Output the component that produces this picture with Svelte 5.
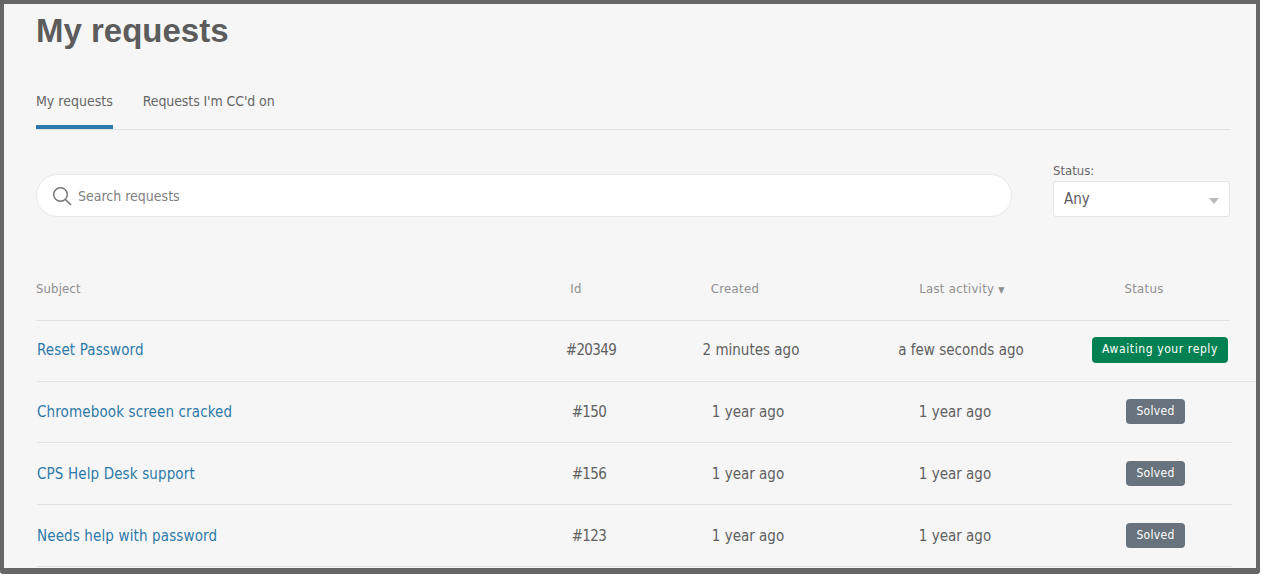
<script lang="ts">
	const rows = [
		{ subject: 'Reset Password', id: '#20349', created: '2 minutes ago', activity: 'a few seconds ago', status: 'Awaiting your reply', open: true },
		{ subject: 'Chromebook screen cracked', id: '#150', created: '1 year ago', activity: '1 year ago', status: 'Solved', open: false },
		{ subject: 'CPS Help Desk support', id: '#156', created: '1 year ago', activity: '1 year ago', status: 'Solved', open: false },
		{ subject: 'Needs help with password', id: '#123', created: '1 year ago', activity: '1 year ago', status: 'Solved', open: false }
	];
</script>

<div class="frame">
	<main class="page">
		<h1>My requests</h1>

		<nav class="tabs">
			<a class="tab active" href="#mine">My requests</a>
			<a class="tab" href="#ccd">Requests I'm CC'd on</a>
		</nav>

		<div class="filters">
			<div class="search">
				<svg width="20" height="20" viewBox="0 0 20 20" fill="none" stroke="#777" stroke-width="1.5" aria-hidden="true">
					<circle cx="8.5" cy="8.5" r="6.8" />
					<path d="M13.6 13.6 19 19" />
				</svg>
				<span>Search requests</span>
			</div>
			<div class="status-filter">
				<span class="status-label">Status:</span>
				<div class="select">
					<span>Any</span>
					<i class="caret"></i>
				</div>
			</div>
		</div>

		<div class="table">
			<div class="row head">
				<div class="subject">Subject</div>
				<div>Id</div>
				<div>Created</div>
				<div>Last activity <small>▼</small></div>
				<div>Status</div>
			</div>
			{#each rows as row, i}
				<div class="row" class:first={i === 0} class:second={i === 1}>
					<div class="subject"><a href="#r">{row.subject}</a></div>
					<div class="id">{row.id}</div>
					<div>{row.created}</div>
					<div>{row.activity}</div>
					<div class="status">
						<span class="badge" class:open={row.open}>{row.status}</span>
					</div>
				</div>
			{/each}
		</div>
	</main>
</div>

<style>
	:global(body) {
		margin: 0;
		background: #fff;
		font-family: "DejaVu Sans", Tahoma, sans-serif;
		font-stretch: condensed;
	}

	.frame {
		box-sizing: border-box;
		width: 1260px;
		height: 574px;
		border: solid #666;
		border-width: 4px 4px 6px 4px;
		border-radius: 0 0 3px 3px;
		overflow: hidden;
		background: #f6f6f6;
	}

	.page {
		padding: 0 0 0 32px;
	}

	h1 {
		margin: 0;
		padding-top: 8px;
		font: bold 33px/38px "Liberation Sans", Arial, sans-serif;
		color: #5c5c5c;
	}

	.tabs {
		display: flex;
		gap: 30px;
		width: 1194px;
		margin-top: 39px;
		border-bottom: 1px solid #e2e2e2;
		height: 40px;
	}

	.tab {
		height: 37px;
		font-size: 14px;
		line-height: 24px;
		letter-spacing: -0.1px;
		color: #666;
		text-decoration: none;
	}

	.tab.active {
		border-bottom: 4px solid #2d7aa9;
		height: 36px;
		letter-spacing: 0;
	}

	.filters {
		display: flex;
		align-items: flex-end;
		gap: 41px;
		width: 1194px;
		margin-top: 33px;
	}

	.search {
		flex: 1;
		display: flex;
		align-items: center;
		gap: 6px;
		height: 41px;
		padding-left: 15px;
		background: #fff;
		border: 1px solid #e8e8e8;
		border-radius: 22px;
		font-size: 14px;
		color: #808080;
	}

	.status-filter {
		width: 177px;
	}

	.status-label {
		display: block;
		font-size: 13px;
		line-height: 16px;
		margin-bottom: 2px;
		color: #666;
	}

	.select {
		display: flex;
		align-items: center;
		justify-content: space-between;
		box-sizing: border-box;
		height: 36px;
		padding: 0 10px;
		background: #fff;
		border: 1px solid #e4e4e4;
		border-radius: 3px;
		font-size: 15px;
		color: #5c5c5c;
	}

	.caret {
		margin-top: 3px;
		border: 5px solid transparent;
		border-top: 6px solid #bbb;
		border-bottom: 0;
	}

	.table {
		margin-top: 40px;
		width: 1196px;
	}

	.row {
		display: grid;
		grid-template-columns: 502px 100px 218px 196px 1fr;
		align-items: center;
		height: 61px;
		margin-left: 1px;
		border-bottom: 1px solid #e2e2e2;
		font-size: 15px;
		color: #606060;
		text-align: center;
	}

	.id {
		letter-spacing: -0.6px;
	}

	.status {
		padding-left: 26px;
	}

	.row.first {
		grid-template-columns: 504px 100px 220px 200px 198px;
		height: 57px;
		padding-bottom: 3px;
		margin-right: -30px;
	}

	.row.second {
		height: 60px;
	}

	.row.second .status {
		padding-bottom: 2px;
	}

	.row.first .status {
		padding-left: 0;
	}

	.row.head {
		grid-template-columns: 490px 100px 218px 236px 128px;
		height: 63px;
		margin-left: 0;
		margin-right: 2px;
		font-size: 13px;
		letter-spacing: 0.3px;
		color: #8f8f8f;
	}

	.subject {
		text-align: left;
		letter-spacing: 0.13px;
	}

	.subject a {
		color: #2d7aa9;
		text-decoration: none;
	}

	.badge {
		display: inline-block;
		padding: 0 10px;
		height: 25px;
		line-height: 24px;
		border-radius: 4px;
		font-size: 12px;
		letter-spacing: 0.3px;
		color: #fff;
		background: #68737d;
	}

	.badge.open {
		height: 26px;
		line-height: 25px;
		letter-spacing: 0.6px;
		background: #038153;
	}

	small {
		font-size: 9px;
	}
</style>
